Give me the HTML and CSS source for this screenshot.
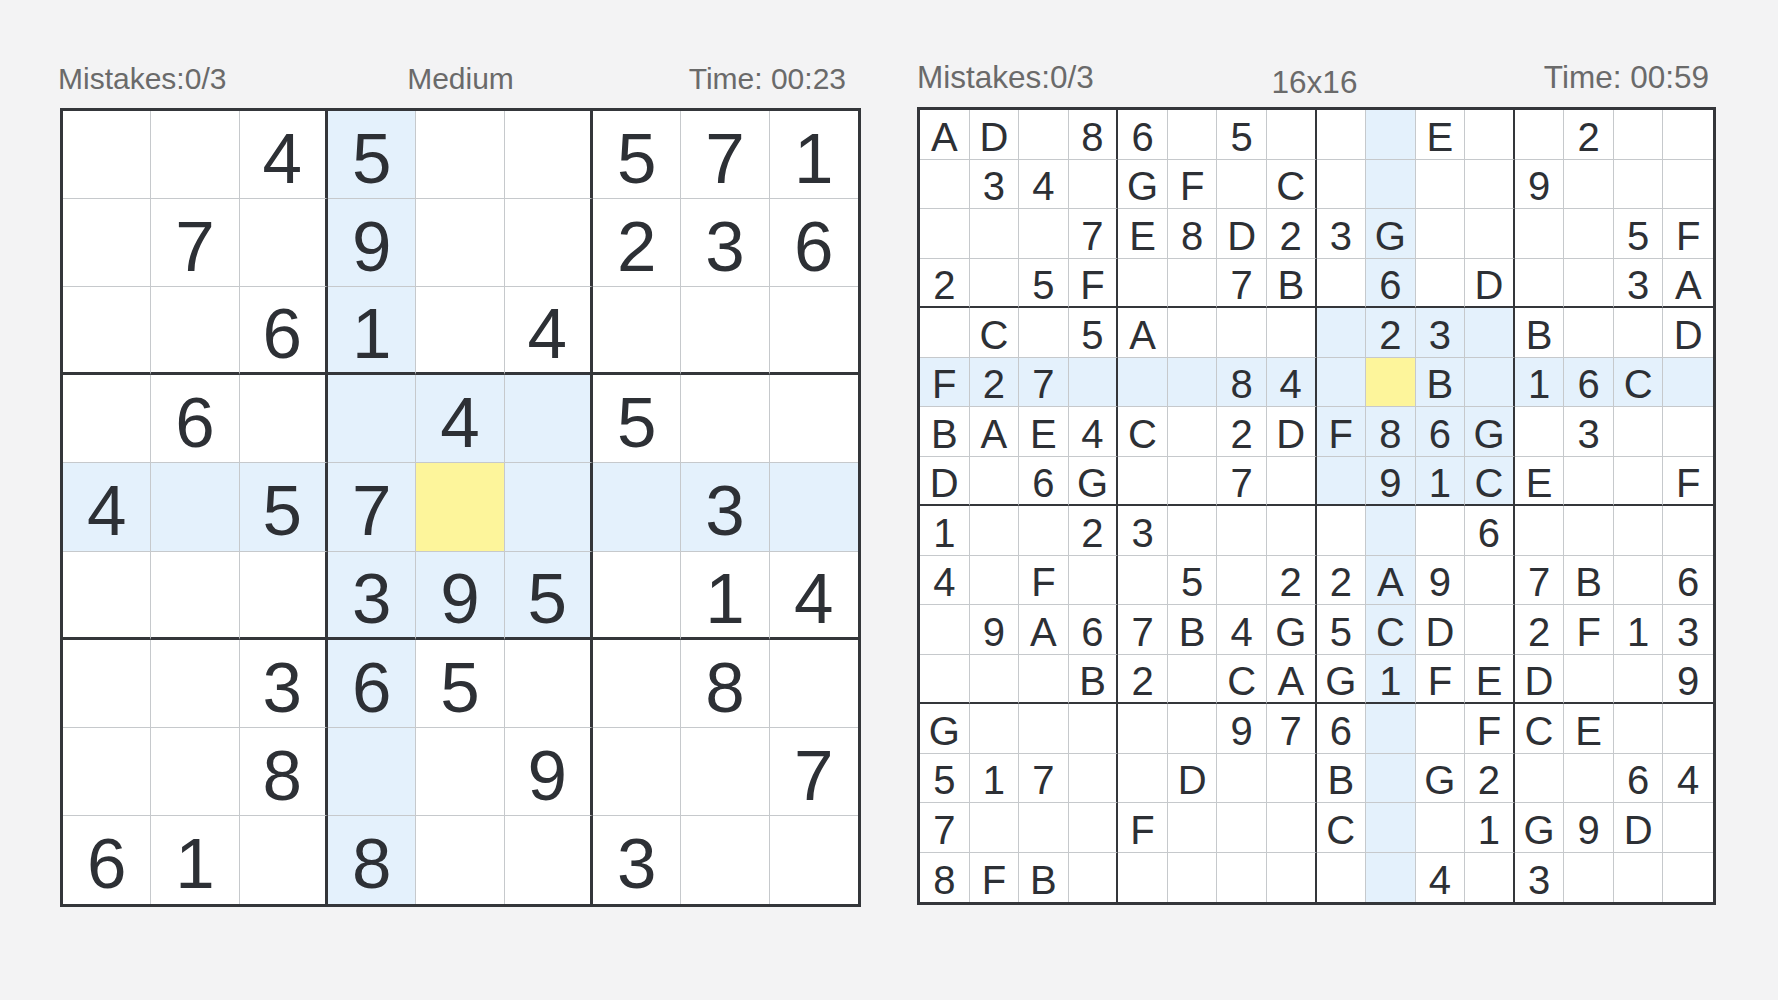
FILE: index.html
```html
<!DOCTYPE html>
<html lang="en">
<head>
<meta charset="utf-8">
<title>Sudoku</title>
<link rel="stylesheet" href="styles.css">
</head>
<body>
<main class="page">
  <section class="panel panel-9">
    <header class="head">
      <span class="h-left">Mistakes:0/3</span>
      <span class="h-mid">Medium</span>
      <span class="h-right">Time: 00:23</span>
    </header>
    <div class="board board9">
      <div></div><div></div><div>4</div><div class="h">5</div><div></div><div></div><div>5</div><div>7</div><div>1</div>
      <div></div><div>7</div><div></div><div class="h">9</div><div></div><div></div><div>2</div><div>3</div><div>6</div>
      <div></div><div></div><div>6</div><div class="h">1</div><div></div><div>4</div><div></div><div></div><div></div>
      <div></div><div>6</div><div></div><div class="h"></div><div class="h">4</div><div class="h"></div><div>5</div><div></div><div></div>
      <div class="h">4</div><div class="h"></div><div class="h">5</div><div class="h">7</div><div class="y"></div><div class="h"></div><div class="h"></div><div class="h">3</div><div class="h"></div>
      <div></div><div></div><div></div><div class="h">3</div><div class="h">9</div><div class="h">5</div><div></div><div>1</div><div>4</div>
      <div></div><div></div><div>3</div><div class="h">6</div><div>5</div><div></div><div></div><div>8</div><div></div>
      <div></div><div></div><div>8</div><div class="h"></div><div></div><div>9</div><div></div><div></div><div>7</div>
      <div>6</div><div>1</div><div></div><div class="h">8</div><div></div><div></div><div>3</div><div></div><div></div>
    </div>
  </section>

  <section class="panel panel-16">
    <header class="head">
      <span class="h-left">Mistakes:0/3</span>
      <span class="h-mid">16x16</span>
      <span class="h-right">Time: 00:59</span>
    </header>
    <div class="board board16">
      <div>A</div><div>D</div><div></div><div>8</div><div>6</div><div></div><div>5</div><div></div><div></div><div class="h"></div><div>E</div><div></div><div></div><div>2</div><div></div><div></div>
      <div></div><div>3</div><div>4</div><div></div><div>G</div><div>F</div><div></div><div>C</div><div></div><div class="h"></div><div></div><div></div><div>9</div><div></div><div></div><div></div>
      <div></div><div></div><div></div><div>7</div><div>E</div><div>8</div><div>D</div><div>2</div><div>3</div><div class="h">G</div><div></div><div></div><div></div><div></div><div>5</div><div>F</div>
      <div>2</div><div></div><div>5</div><div>F</div><div></div><div></div><div>7</div><div>B</div><div></div><div class="h">6</div><div></div><div>D</div><div></div><div></div><div>3</div><div>A</div>
      <div></div><div>C</div><div></div><div>5</div><div>A</div><div></div><div></div><div></div><div class="h"></div><div class="h">2</div><div class="h">3</div><div class="h"></div><div>B</div><div></div><div></div><div>D</div>
      <div class="h">F</div><div class="h">2</div><div class="h">7</div><div class="h"></div><div class="h"></div><div class="h"></div><div class="h">8</div><div class="h">4</div><div class="h"></div><div class="y"></div><div class="h">B</div><div class="h"></div><div class="h">1</div><div class="h">6</div><div class="h">C</div><div class="h"></div>
      <div>B</div><div>A</div><div>E</div><div>4</div><div>C</div><div></div><div>2</div><div>D</div><div class="h">F</div><div class="h">8</div><div class="h">6</div><div class="h">G</div><div></div><div>3</div><div></div><div></div>
      <div>D</div><div></div><div>6</div><div>G</div><div></div><div></div><div>7</div><div></div><div class="h"></div><div class="h">9</div><div class="h">1</div><div class="h">C</div><div>E</div><div></div><div></div><div>F</div>
      <div>1</div><div></div><div></div><div>2</div><div>3</div><div></div><div></div><div></div><div></div><div class="h"></div><div></div><div>6</div><div></div><div></div><div></div><div></div>
      <div>4</div><div></div><div>F</div><div></div><div></div><div>5</div><div></div><div>2</div><div>2</div><div class="h">A</div><div>9</div><div></div><div>7</div><div>B</div><div></div><div>6</div>
      <div></div><div>9</div><div>A</div><div>6</div><div>7</div><div>B</div><div>4</div><div>G</div><div>5</div><div class="h">C</div><div>D</div><div></div><div>2</div><div>F</div><div>1</div><div>3</div>
      <div></div><div></div><div></div><div>B</div><div>2</div><div></div><div>C</div><div>A</div><div>G</div><div class="h">1</div><div>F</div><div>E</div><div>D</div><div></div><div></div><div>9</div>
      <div>G</div><div></div><div></div><div></div><div></div><div></div><div>9</div><div>7</div><div>6</div><div class="h"></div><div></div><div>F</div><div>C</div><div>E</div><div></div><div></div>
      <div>5</div><div>1</div><div>7</div><div></div><div></div><div>D</div><div></div><div></div><div>B</div><div class="h"></div><div>G</div><div>2</div><div></div><div></div><div>6</div><div>4</div>
      <div>7</div><div></div><div></div><div></div><div>F</div><div></div><div></div><div></div><div>C</div><div class="h"></div><div></div><div>1</div><div>G</div><div>9</div><div>D</div><div></div>
      <div>8</div><div>F</div><div>B</div><div></div><div></div><div></div><div></div><div></div><div></div><div class="h"></div><div>4</div><div></div><div>3</div><div></div><div></div><div></div>
    </div>
  </section>
</main>
</body>
</html>
```

FILE: styles.css
```css
* { box-sizing: border-box; }

html, body {
  margin: 0;
  padding: 0;
}

body {
  background: #f3f3f4;
  font-family: "Liberation Sans", Arial, Helvetica, sans-serif;
  color: #2d3035;
  width: 1778px;
  height: 1000px;
  overflow: hidden;
}

.page {
  display: flex;
  align-items: flex-start;
  gap: 56px;
  padding: 60px 0 0 60px;
}

.panel-9 {
  width: 801px;
  margin-top: 2px;
}

.panel-16 {
  width: 799px;
}

.head {
  display: grid;
  grid-template-columns: 1fr auto 1fr;
  align-items: start;
  height: 34px;
  line-height: 34px;
  color: #6a6a6a;
  white-space: nowrap;
}

.panel-9 .head {
  font-size: 30px;
  margin-bottom: 12px;
}

.panel-16 .head {
  font-size: 31.5px;
  margin-bottom: 13px;
}

.h-left { justify-self: start; }
.h-mid { justify-self: center; }
.h-right { justify-self: end; }

.panel-9 .h-left { margin-left: -2px; }
.panel-9 .h-right { margin-right: 15px; }
.panel-16 .h-mid { padding-top: 5px; margin-right: 4px; }
.panel-16 .h-right { margin-right: 7px; }

.board {
  display: grid;
  border: 3px solid #34363a;
  background: #ffffff;
}

.board > div {
  display: flex;
  align-items: center;
  justify-content: center;
  background: #ffffff;
  border-right: 1px solid #c6c9cc;
  border-bottom: 1px solid #c6c9cc;
  line-height: 1;
}

.board > div.h { background: #e4f1fc; }
.board > div.y { background: #fdf59b; }

/* 9x9 */
.board9 {
  height: 799px;
  grid-template-columns: repeat(9, 1fr);
  grid-template-rows: repeat(9, 1fr);
}

.board9 > div {
  font-size: 71px;
  padding-top: 8px;
}

.board9 > div:nth-child(9n+3),
.board9 > div:nth-child(9n+6) {
  border-right: 3px solid #34363a;
}

.board9 > div:nth-child(9n) {
  border-right: none;
}

.board9 > div:nth-child(n+19):nth-child(-n+27),
.board9 > div:nth-child(n+46):nth-child(-n+54) {
  border-bottom: 3px solid #34363a;
}

.board9 > div:nth-child(n+73) {
  border-bottom: none;
}

/* 16x16 */
.board16 {
  height: 798px;
  grid-template-columns: repeat(16, 1fr);
  grid-template-rows: repeat(16, 1fr);
}

.board16 > div {
  font-size: 40px;
  padding-top: 5px;
}

.board16 > div:nth-child(16n+4),
.board16 > div:nth-child(16n+8),
.board16 > div:nth-child(16n+12) {
  border-right: 2.5px solid #34363a;
}

.board16 > div:nth-child(16n) {
  border-right: none;
}

.board16 > div:nth-child(n+49):nth-child(-n+64),
.board16 > div:nth-child(n+113):nth-child(-n+128),
.board16 > div:nth-child(n+177):nth-child(-n+192) {
  border-bottom: 2.5px solid #34363a;
}

.board16 > div:nth-child(n+241) {
  border-bottom: none;
}
```
